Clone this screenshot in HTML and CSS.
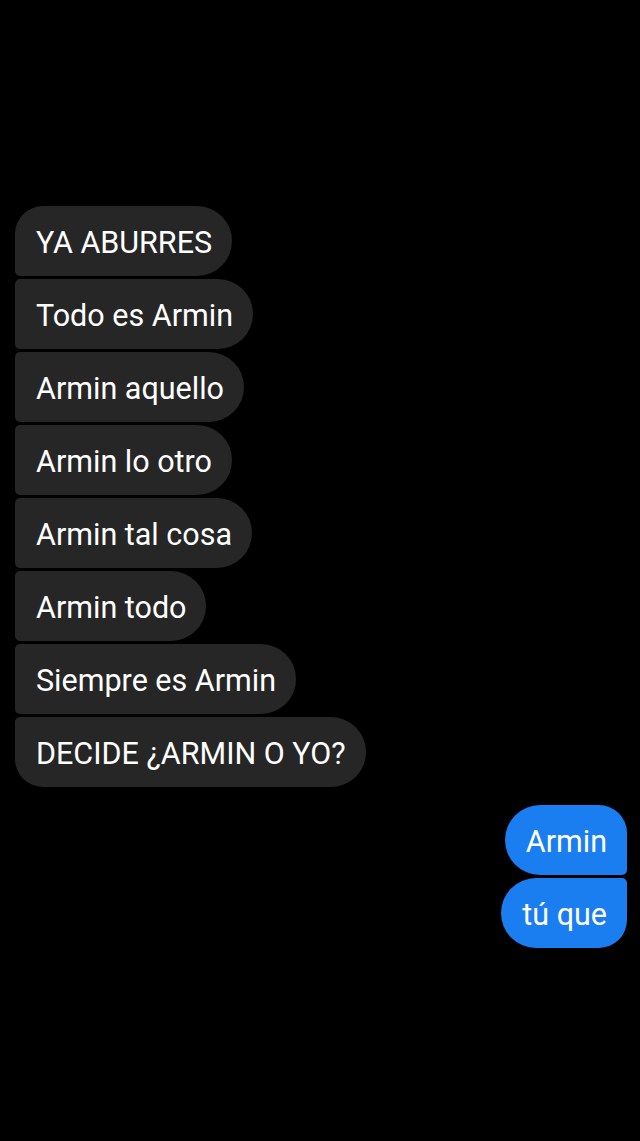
FILE: index.html
```html
<!DOCTYPE html>
<html lang="es">
<head>
<meta charset="utf-8">
<title>Chat</title>
<link rel="stylesheet" href="styles.css">
</head>
<body>
<main class="chat">
  <div class="group group-in">
    <div class="bubble in first">YA ABURRES</div>
    <div class="bubble in">Todo es Armin</div>
    <div class="bubble in">Armin aquello</div>
    <div class="bubble in">Armin lo otro</div>
    <div class="bubble in">Armin tal cosa</div>
    <div class="bubble in">Armin todo</div>
    <div class="bubble in">Siempre es Armin</div>
    <div class="bubble in last">DECIDE ¿ARMIN O YO?</div>
  </div>
  <div class="group group-out">
    <div class="bubble out first">Armin</div>
    <div class="bubble out last">tú que</div>
  </div>
</main>
</body>
</html>
```
FILE: styles.css
```css
html, body {
  margin: 0;
  padding: 0;
  background: #000;
  height: 100%;
}
body {
  font-family: Roboto, "Noto Sans", sans-serif;
  color: #fff;
}
.chat {
  display: flex;
  flex-direction: column;
  padding: 206px 13px 0 15px;
  gap: 18px;
}
.group {
  display: flex;
  flex-direction: column;
  gap: 3px;
}
.group-in { align-items: flex-start; }
.group-out { align-items: flex-end; }
.bubble {
  box-sizing: border-box;
  height: 70px;
  display: flex;
  align-items: center;
  padding: 4px 20px 0 21px;
  font-size: 30.5px;
  line-height: 1;
  white-space: nowrap;
}
.in {
  background: #262626;
  border-radius: 5px 35px 35px 5px;
}
.in.first { border-top-left-radius: 28px; }
.in.last { border-bottom-left-radius: 28px; }
.out {
  background: #1a7df0;
  border-radius: 35px 5px 5px 35px;
}
.out.first { border-top-right-radius: 28px; }
.out.last { border-bottom-right-radius: 28px; }
```
